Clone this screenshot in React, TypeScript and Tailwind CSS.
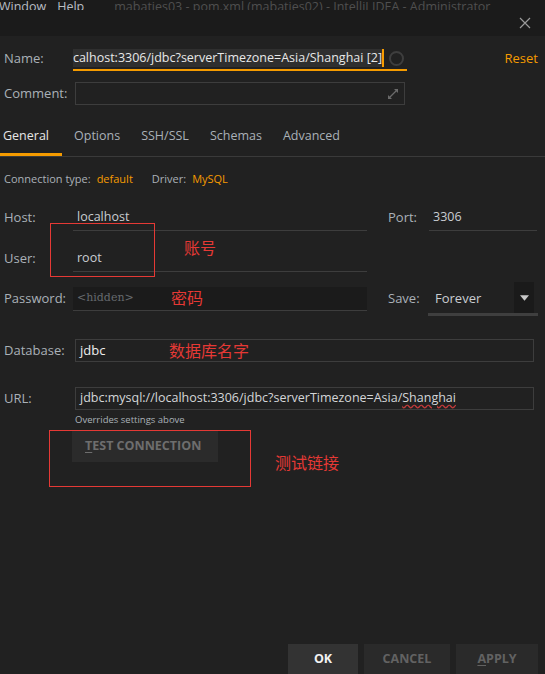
import { useState } from "react";

const labelCls = "text-[13px] text-[#aab1b8]";

function CloseIcon() {
  return (
    <svg viewBox="0 0 12 12" className="w-[12px] h-[12px]" aria-hidden="true">
      <path d="M1 1L11 11M11 1L1 11" stroke="#9a9a9a" strokeWidth="1.2" fill="none" />
    </svg>
  );
}

function ExpandIcon() {
  return (
    <svg viewBox="0 0 12 12" className="w-[12px] h-[12px]" aria-hidden="true">
      <path d="M7 1H11V5Z" fill="#6a6a6a" />
      <path d="M1 7V11H5Z" fill="#6a6a6a" />
      <path d="M10 2L2 10" stroke="#6a6a6a" strokeWidth="1.3" />
    </svg>
  );
}

function Field({ value, width }: { value: string; width: string }) {
  return (
    <div className={`${width} h-[26px] border-b border-[#3d3d3d] flex items-center pl-[4px] text-[12.5px] text-[#c9cdd1]`}>
      {value}
    </div>
  );
}

export default function App() {
  const [tab, setTab] = useState("General");
  const tabs = ["General", "Options", "SSH/SSL", "Schemas", "Advanced"];

  return (
    <div
      className="relative w-[545px] h-[674px] overflow-hidden bg-[#212121] flex flex-col"
      style={{ fontFamily: '"Open Sans", "Noto Sans CJK SC", sans-serif' }}
    >
      {/* Window title strip */}
      <div className="h-[36px] bg-[#1b1b1b] flex flex-col">
        <div className="h-[10px] overflow-hidden flex items-end text-[12.5px] leading-none whitespace-nowrap">
          <span className="-ml-[1px] text-[#b9bec4] -mb-[3px]">Window</span>
          <span className="ml-[11px] text-[#b9bec4] -mb-[3px]">Help</span>
          <span className="ml-[30px] text-[#4f4f4f] -mb-[3px]">
            mabaties03 - pom.xml (mabaties02) - IntelliJ IDEA - Administrator
          </span>
        </div>
        <div className="flex justify-end pr-[14px] mt-[7px]">
          <CloseIcon />
        </div>
      </div>

      {/* Name */}
      <div className="mt-[11px] h-[24px] flex items-center">
        <span className={`${labelCls} w-[73px] pl-[4px]`}>Name:</span>
        <div className="w-[334px] h-[24px] border-b-2 border-[#f59b00] flex items-center">
          <div className="w-[309px] flex justify-end overflow-hidden whitespace-nowrap">
            <span className="bg-[#2f2f2f] text-[#e8e8e8] text-[12.5px] leading-[18px] pl-[2px]">
              localhost:3306/jdbc?serverTimezone=Asia/Shanghai [2]
            </span>
          </div>
          <span className="w-[2px] h-[18px] bg-[#f59b00]" />
          <span className="ml-[5px] w-[15px] h-[15px] rounded-full border-2 border-[#3e3e3e]" />
        </div>
        <span className="ml-auto mr-[7px] text-[13px] text-[#f59b00]">Reset</span>
      </div>

      {/* Comment */}
      <div className="mt-[11px] h-[23px] flex items-center">
        <span className={`${labelCls} w-[75px] pl-[4px]`}>Comment:</span>
        <div className="w-[330px] h-[23px] border border-[#3d3d3d] flex items-end justify-end pr-[5px] pb-[4px]">
          <ExpandIcon />
        </div>
      </div>

      {/* Tabs */}
      <div className="mt-[15px] h-[36px] flex">
        {tabs.map((t) => (
          <button
            key={t}
            onClick={() => setTab(t)}
            className={`h-[36px] text-[12.5px] px-[3px] mr-[15px] first:mr-[9px] first:pr-[13px] flex items-center border-b-[3px] ${
              tab === t ? "border-[#f59b00] text-[#e6e6e6]" : "border-transparent text-[#aab1b8]"
            }`}
          >
            {t}
          </button>
        ))}
      </div>
      <div className="h-px bg-[#3a3a3a]" />

      {/* Connection type */}
      <div className="mt-[13px] h-[18px] flex items-center pl-[4px] text-[11px]">
        <span className="text-[#aab1b8]">Connection type:</span>
        <span className="ml-[6px] text-[#f59b00]">default</span>
        <span className="ml-[19px] text-[#aab1b8]">Driver:</span>
        <span className="ml-[6px] text-[#f59b00]">MySQL</span>
      </div>

      {/* Host / Port */}
      <div className="mt-[17px] h-[26px] flex items-center">
        <span className={`${labelCls} w-[73px] pl-[4px]`}>Host:</span>
        <Field value="localhost" width="w-[294px]" />
        <span className={`${labelCls} ml-[21px] w-[41px]`}>Port:</span>
        <Field value="3306" width="w-[108px]" />
      </div>

      {/* User */}
      <div className="mt-[15px] h-[26px] flex items-center">
        <span className={`${labelCls} w-[73px] pl-[4px]`}>User:</span>
        <Field value="root" width="w-[294px]" />
      </div>

      {/* Password / Save */}
      <div className="mt-[10px] h-[34px] flex items-center">
        <span className={`${labelCls} w-[73px] pl-[4px]`}>Password:</span>
        <div className="w-[294px] h-[24px] bg-[#1b1b1b] border-b border-[#3d3d3d] flex items-center pl-[4px]">
          <span
            className="text-[11px] text-[#666a6e]"
            style={{ fontFamily: '"DejaVu Serif", serif' }}
          >
            &lt;hidden&gt;
          </span>
        </div>
        <span className={`${labelCls} ml-[21px] w-[40px]`}>Save:</span>
        <div className="w-[110px] h-[34px] border-b-[3px] border-[#3f3f3f] flex items-start">
          <span className="mt-[7px] ml-[7px] text-[13px] text-[#c9cdd1]">Forever</span>
          <div className="ml-auto mr-[4px] w-[20px] h-[31px] bg-[#1a1a1a] flex items-center justify-center">
            <svg viewBox="0 0 10 6" className="w-[9px] h-[6px]" aria-hidden="true">
              <path d="M0 0H10L5 6Z" fill="#c8c8c8" />
            </svg>
          </div>
        </div>
      </div>

      {/* Database */}
      <div className="mt-[23px] h-[23px] flex items-center">
        <span className={`${labelCls} w-[75px] pl-[4px]`}>Database:</span>
        <div className="w-[459px] h-[23px] border border-[#3d3d3d] flex items-center pl-[4px] text-[13px] text-[#eeeeee]">
          jdbc
        </div>
      </div>

      {/* URL */}
      <div className="mt-[25px] h-[23px] flex items-center">
        <span className={`${labelCls} w-[75px] pl-[4px]`}>URL:</span>
        <div className="w-[459px] h-[23px] border border-[#3d3d3d] flex items-center pl-[4px] text-[12.5px] text-[#d4d6d8] whitespace-nowrap">
          jdbc:mysql://localhost:3306/jdbc?serverTimezone=Asia/
          <span className="underline decoration-wavy decoration-[#c23a3a] underline-offset-2">Shanghai</span>
        </div>
      </div>
      <div className="mt-[4px] h-[12px] pl-[75px] flex items-center text-[9.5px] text-[#aab1b8]">
        Overrides settings above
      </div>

      {/* Test connection */}
      <div className="mt-[5px] pl-[72px]">
        <button className="w-[146px] h-[31px] bg-[#2b2b2b] text-[12.5px] font-bold text-[#6e6e6e] flex items-center pl-[13px]">
          <span className="underline underline-offset-2">T</span>EST CONNECTION
        </button>
      </div>

      {/* Dialog buttons */}
      <div className="mt-auto h-[30px] flex justify-end gap-[6px] pr-[7px]">
        <button className="w-[70px] h-[30px] bg-[#333333] text-[12.5px] font-bold text-[#f2f2f2]">OK</button>
        <button className="w-[86px] h-[30px] bg-[#2a2a2a] text-[12.5px] font-bold text-[#626262]">CANCEL</button>
        <button className="w-[82px] h-[30px] bg-[#2a2a2a] text-[12.5px] font-bold text-[#626262]">
          <span className="underline underline-offset-2">A</span>PPLY
        </button>
      </div>

      {/* Red annotations drawn over the form */}
      <div className="absolute left-[50px] top-[223px] w-[105px] h-[54px] border border-[#e53935]" />
      <span className="absolute left-[184px] top-[238px] text-[16px] leading-[20px] text-[#e53935]">账号</span>
      <span className="absolute left-[171px] top-[288px] text-[16px] leading-[20px] text-[#e53935]">密码</span>
      <span className="absolute left-[169px] top-[341px] text-[16px] leading-[20px] text-[#e53935]">数据库名字</span>
      <div className="absolute left-[49px] top-[430px] w-[202px] h-[57px] border border-[#e53935]" />
      <span className="absolute left-[275px] top-[453px] text-[16px] leading-[20px] text-[#e53935]">测试链接</span>
    </div>
  );
}
